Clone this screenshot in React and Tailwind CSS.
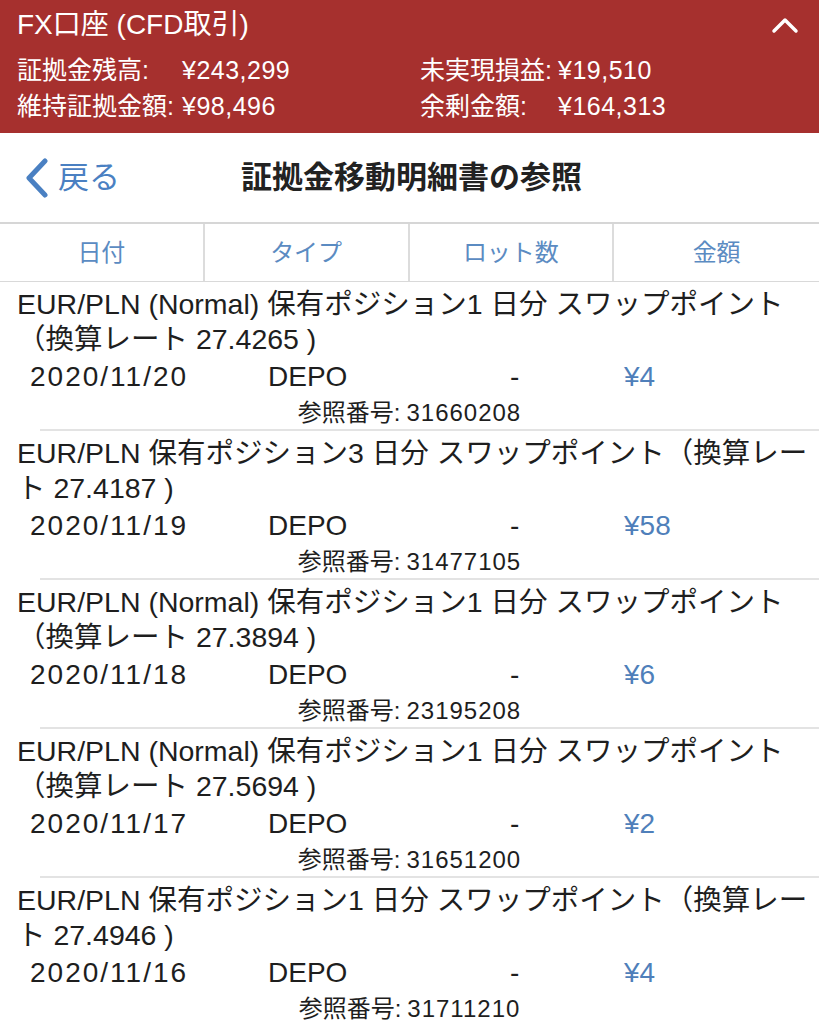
const font = { fontFamily: '"Liberation Sans", "Noto Sans CJK JP", sans-serif' };

const summary = [
  ["証拠金残高:", "¥243,299", "未実現損益:", "¥19,510"],
  ["維持証拠金額:", "¥98,496", "余剰金額:", "¥164,313"],
];

const rows = [
  {
    lines: ["EUR/PLN (Normal) 保有ポジション1 日分 スワップポイント", "（換算レート 27.4265 )"],
    date: "2020/11/20",
    amount: "¥4",
    ref: "31660208",
  },
  {
    lines: ["EUR/PLN 保有ポジション3 日分 スワップポイント（換算レー", "ト 27.4187 )"],
    date: "2020/11/19",
    amount: "¥58",
    ref: "31477105",
  },
  {
    lines: ["EUR/PLN (Normal) 保有ポジション1 日分 スワップポイント", "（換算レート 27.3894 )"],
    date: "2020/11/18",
    amount: "¥6",
    ref: "23195208",
  },
  {
    lines: ["EUR/PLN (Normal) 保有ポジション1 日分 スワップポイント", "（換算レート 27.5694 )"],
    date: "2020/11/17",
    amount: "¥2",
    ref: "31651200",
  },
  {
    lines: ["EUR/PLN 保有ポジション1 日分 スワップポイント（換算レー", "ト 27.4946 )"],
    date: "2020/11/16",
    amount: "¥4",
    ref: "31711210",
  },
];

const AccountHeader = () => (
  <div className="bg-[#a6302e] text-white h-[133px] px-[17px] pt-[7px]">
    <div className="flex items-center justify-between h-[36px]">
      <span className="text-[28px] leading-none">FX口座 (CFD取引)</span>
      <svg width="30" height="20" viewBox="0 0 30 20" className="mr-[2px]">
        <path d="M4 16 L15 5 L26 16" fill="none" stroke="white" strokeWidth="3.5" strokeLinecap="round" strokeLinejoin="round" />
      </svg>
    </div>
    <div className="mt-[12px] flex flex-col gap-[6px] text-[25px] leading-[30px]">
      {summary.map((r) => (
        <div key={r[0]} className="grid grid-cols-[165px_238px_138px_1fr]">
          <span>{r[0]}</span>
          <span className="tracking-[0.5px]">{r[1]}</span>
          <span>{r[2]}</span>
          <span className="tracking-[0.5px]">{r[3]}</span>
        </div>
      ))}
    </div>
  </div>
);

const NavBar = () => (
  <div className="relative h-[91px] flex items-center justify-center border-b-2 border-[#d6d6d6]">
    <div className="absolute left-[24px] top-0 h-full flex items-center gap-[8px] text-[#4a80c2]">
      <svg width="26" height="40" viewBox="0 0 26 40">
        <path d="M21 3 L5 20 L21 37" fill="none" stroke="#4a80c2" strokeWidth="5" strokeLinecap="round" strokeLinejoin="round" />
      </svg>
      <span className="text-[31px] leading-none">戻る</span>
    </div>
    <span className="text-[31px] font-bold text-[#222] leading-none ml-[4px]">証拠金移動明細書の参照</span>
  </div>
);

const TableHead = () => (
  <div className="grid grid-cols-4 h-[58px] border-b border-[#d9d9d9] text-[24px] text-[#5b8bc2]">
    {["日付", "タイプ", "ロット数", "金額"].map((h, i) => (
      <div
        key={h}
        className={`flex items-center justify-center ${i < 3 ? "border-r-2 border-[#dcdcdc]" : ""}`}
      >
        {h}
      </div>
    ))}
  </div>
);

const Row = ({ row, last }) => (
  <div className="pt-[5px]">
    <div className="px-[17px] text-[28.5px] leading-[35px] text-[#1e1e1e]">
      {row.lines.map((l) => (
        <div key={l} className="whitespace-nowrap">{l}</div>
      ))}
    </div>
    <div className="flex items-center h-[40px] pl-[30px] text-[28px] text-[#1e1e1e]">
      <span className="w-[238px] tracking-[2px]">{row.date}</span>
      <span className="w-[236px]">DEPO</span>
      <span className="w-[120px] pl-[6px]">-</span>
      <span className="text-[#4f7fba]">{row.amount}</span>
    </div>
    <div className="h-[32px] flex items-center justify-center text-[24px] text-[#1e1e1e]">
      参照番号: <span className="ml-[6px] tracking-[1px]">{row.ref}</span>
    </div>
    {!last && <div className="ml-[40px] h-[2px] bg-[#e3e3e3]" />}
  </div>
);

export default function App() {
  return (
    <div className="w-[819px] h-[1024px] overflow-hidden bg-white" style={font}>
      <AccountHeader />
      <NavBar />
      <TableHead />
      {rows.map((r, i) => (
        <Row key={r.ref} row={r} last={i === rows.length - 1} />
      ))}
    </div>
  );
}
